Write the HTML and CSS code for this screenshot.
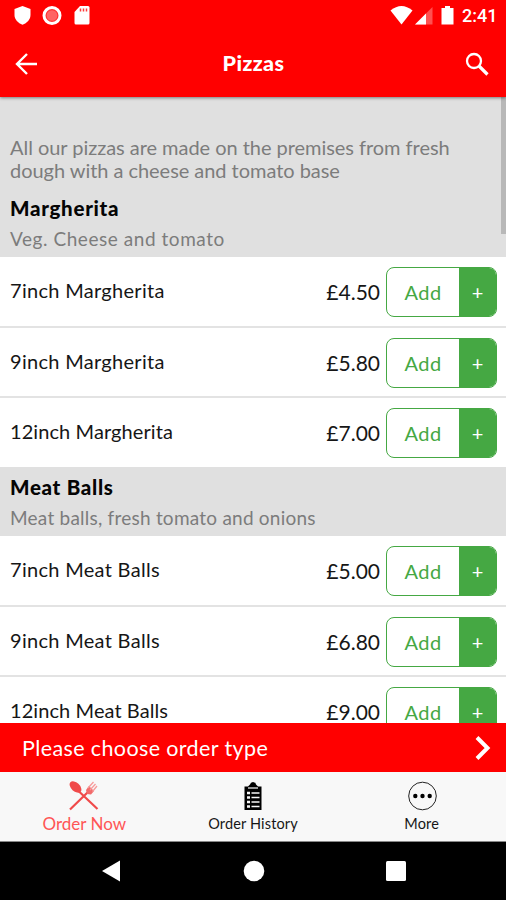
FILE: index.html
```html
<!DOCTYPE html>
<html lang="en">
<head>
<meta charset="utf-8">
<title>Pizzas</title>
<link rel="stylesheet" href="styles.css">
</head>
<body>
<header class="top">
  <div class="status">
    <svg width="74" height="30" viewBox="0 0 74 30" fill="#fff">
      <path d="M22.500 6 30.500 9v6c0 4.500-3.500 8-8 9.800-4.500-1.800-8-5.300-8-9.800V9z"/>
      <circle cx="52" cy="15.500" r="8" fill="#f33" stroke="#fff" stroke-width="3"/>
      <circle cx="52" cy="15.500" r="5.300" fill="#ff6464"/>
    </svg>
    <svg width="16" height="30" viewBox="74 0 16 30"><path d="M80 6h8q1.500 0 1.500 1.500V23q0 1.500-1.500 1.500H76q-1.500 0-1.500-1.500V12z" fill="#fff"/><path d="M80.500 8.500v3M83.500 8.500v3M86.500 8.500v3" stroke="#ff3b3b" stroke-width="1.500"/></svg>
    <svg class="status-right" width="66" height="30" viewBox="390 0 66 30" fill="#fff">
      <path d="M390.500 10.500Q401.500 1.500 412.500 10.500L401.500 24.500z"/>
      <path d="M415 24.500 432.500 7v17.500z" fill="#ff5050"/>
      <path d="M415 24.500 426 13.500v11z"/>
      <path d="M445 6h5v2h3.500v16.500h-12V8h3.500z"/>
    </svg>
    <span class="clock">2:41</span>
  </div>
  <div class="appbar">
    <svg width="24" height="24" viewBox="0 0 24 24" fill="none" stroke="#fff" stroke-width="2.400"><path d="M23 12H3M13 2 3 12l10 10"/></svg>
    <h1>Pizzas</h1>
    <svg width="24" height="24" viewBox="0 0 24 24" fill="none" stroke="#fff"><circle cx="9" cy="9" r="7" stroke-width="2.300"/><path d="m14 14 8.500 8.500" stroke-width="3.200"/></svg>
  </div>
</header>
<main class="menu">
  <section class="group first">
    <p class="intro">All our pizzas are made on the premises from fresh<br>dough with a cheese and tomato base</p>
    <h2>Margherita</h2>
    <p class="desc veg">Veg. Cheese and tomato</p>
  </section>
  <div class="row"><span class="name">7inch Margherita</span><span class="price">£4.50</span><span class="add"><span>Add</span><b>+</b></span></div>
  <div class="row"><span class="name">9inch Margherita</span><span class="price">£5.80</span><span class="add"><span>Add</span><b>+</b></span></div>
  <div class="row last"><span class="name">12inch Margherita</span><span class="price">£7.00</span><span class="add"><span>Add</span><b>+</b></span></div>
  <section class="group">
    <h2>Meat Balls</h2>
    <p class="desc">Meat balls, fresh tomato and onions</p>
  </section>
  <div class="row"><span class="name">7inch Meat Balls</span><span class="price">£5.00</span><span class="add"><span>Add</span><b>+</b></span></div>
  <div class="row"><span class="name">9inch Meat Balls</span><span class="price">£6.80</span><span class="add"><span>Add</span><b>+</b></span></div>
  <div class="row last"><span class="name">12inch Meat Balls</span><span class="price">£9.00</span><span class="add"><span>Add</span><b>+</b></span></div>
  <i class="scrollbar"></i>
</main>
<div class="order"><span>Please choose order type</span>
  <svg width="18" height="26" viewBox="0 0 18 26" fill="none" stroke="#fff" stroke-width="4"><path d="m3 2.500 10.500 10.500L3 23.500"/></svg>
</div>
<nav class="tabs">
  <div class="tab active">
    <svg width="30" height="30" viewBox="0 0 30 30"><path d="M10 10.500 28.500 28M1 28.500 19 11" stroke="#f04a4a" stroke-width="2.200" fill="none"/><ellipse cx="6.500" cy="6" rx="7" ry="4.300" transform="rotate(43 6.500 6)" fill="#f04a4a"/><path d="m17 9 1 4 4 .5 3-3.500-5-5z" fill="#f26a6a"/><path d="m19 7 5.500-6M21 9l5.500-6M23.500 10.500l4.500-5.500" stroke="#f79a9a" stroke-width="1.300"/></svg>
    <span>Order Now</span>
  </div>
  <div class="tab">
    <svg width="30" height="30" viewBox="0 0 30 30"><path d="M6.500 5.500H10l2-2q.5-2.500 3-2.500T18 3.500l2 2h3.500v23.500h-17z" fill="#000"/><path d="M10 7h10" stroke="#f8f8f8" stroke-width="1.200"/><path d="M9 12h3M9 16.500h3M9 21h3M9 25.500h3" stroke="#f8f8f8" stroke-width="2.500"/><path d="M13.500 12h8M13.500 16.500h8M13.500 21h8M13.500 25.500h8" stroke="#f8f8f8" stroke-width="1.500"/></svg>
    <span>Order History</span>
  </div>
  <div class="tab">
    <svg width="30" height="30" viewBox="0 0 30 30"><circle cx="15.500" cy="15" r="13.800" fill="none" stroke="#222"/><g fill="#000"><circle cx="8.300" cy="15" r="2.200"/><circle cx="15.500" cy="15" r="2.200"/><circle cx="22.700" cy="15" r="2.200"/></g></svg>
    <span>More</span>
  </div>
</nav>
<footer class="system">
  <svg width="20" height="22" viewBox="0 0 20 22"><path d="M1 11 19 .5v21z" fill="#fff"/></svg>
  <svg width="22" height="22" viewBox="0 0 22 22"><circle cx="11" cy="11" r="10.300" fill="#fff"/></svg>
  <svg width="20" height="20" viewBox="0 0 20 20"><rect width="20" height="20" rx="1.500" fill="#fff"/></svg>
</footer>
</body>
</html>
```
FILE: styles.css
```css
* { box-sizing: border-box; }
body { margin: 0; width: 506px; height: 900px; overflow: hidden; display: flex; flex-direction: column; background: #fff; font-family: Lato, sans-serif; color: #161616; }
h1, h2, p { margin: 0; }
svg { display: block; flex: none; }
.top { height: 97px; flex: none; background: #f00; box-shadow: 0 1px 3px rgba(0,0,0,.45); position: relative; z-index: 2; color: #fff; }
.status { height: 30px; display: flex; }
.status-right { margin-left: 300px; }
.clock { font: 500 18px/32px Roboto, sans-serif; margin-left: 6px; }
.appbar { height: 67px; display: flex; align-items: center; justify-content: space-between; padding: 0 17px 0 14px; }
.appbar h1 { font-size: 21.500px; font-weight: 900; letter-spacing: .4px; margin: -2px 0 0 4px; }
.menu { height: 626px; flex: none; overflow: hidden; position: relative; }
.group { background: #e0e0e0; height: 69px; padding: 7px 10px 0; }
.group.first { height: 160px; padding-top: 39px; }
.intro { font-size: 20px; line-height: 23px; color: #7c7c7c; margin-bottom: 13px; white-space: nowrap; letter-spacing: -.04px; }
h2 { font-size: 20.500px; line-height: 26px; font-weight: 900; color: #050505; letter-spacing: .7px; }
.desc { font-size: 19px; line-height: 24px; color: #7c7c7c; margin-top: 6px; letter-spacing: .23px; }
.veg { letter-spacing: .55px; }
.row { height: 70.500px; border-bottom: 2px solid #e3e3e3; display: flex; align-items: flex-start; padding: 10px 9px 0 10px; }
.row.last { height: 69px; border: 0; }
.name { flex: 1; font-size: 20px; line-height: 46px; letter-spacing: .3px; }
.last .name { letter-spacing: .08px; }
.price { font-size: 21px; line-height: 49px; margin-right: 6px; }
.add { width: 111px; height: 50px; border: 1.500px solid #45a843; border-radius: 8px; overflow: hidden; display: flex; color: #45a843; font-size: 20px; line-height: 48px; text-align: center; }
.add span { flex: 1; letter-spacing: .5px; }
.add b { width: 37px; background: #45a843; color: #fff; font-weight: 400; }
.scrollbar { position: absolute; right: 0; top: 0; width: 5px; height: 137px; background: #b8b8b8; }
.order { height: 49px; flex: none; background: #f00; color: #fff; display: flex; align-items: center; justify-content: space-between; padding: 0 14px 0 22px; font-size: 21.500px; letter-spacing: .38px; }
.tabs { height: 70px; flex: none; background: #f8f8f8; border-bottom: 1px solid #888; display: flex; }
.tab { flex: 1; display: flex; flex-direction: column; align-items: center; padding-top: 9px; font-size: 14.500px; line-height: 26px; letter-spacing: .15px; }
.tab.active { color: #f55; font-size: 17px; line-height: 25px; letter-spacing: 0; }
.system { flex: 1; background: #000; display: flex; align-items: center; padding: 0 100px 0 101px; justify-content: space-between; }
```
